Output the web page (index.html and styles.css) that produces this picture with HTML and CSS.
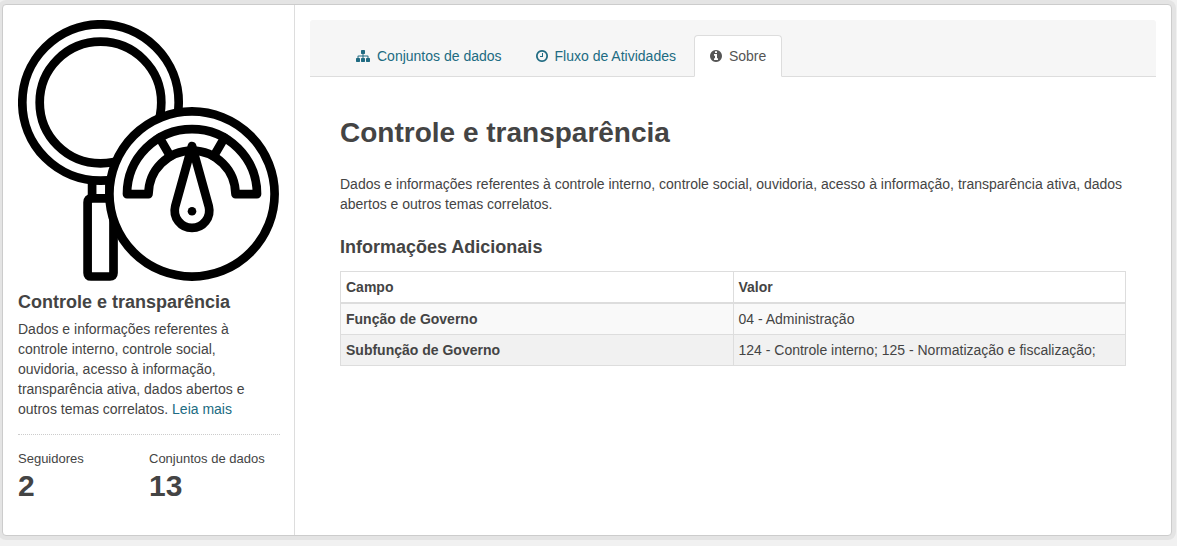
FILE: index.html
```html
<!DOCTYPE html>
<html lang="pt-BR">
<head>
<meta charset="utf-8">
<title>Controle e transparência</title>
<link rel="stylesheet" href="styles.css">
</head>
<body>
<div class="wrapper">
  <aside class="sidebar">
    <svg class="group-image" viewBox="18 20 262 262" fill="none" stroke="#000" stroke-width="8.7" stroke-linejoin="round" stroke-linecap="round">
      <circle cx="100.5" cy="102.5" r="78.2"/>
      <circle cx="100.5" cy="102.5" r="60.8"/>
      <path d="M92.1 184V198M109.5 184V198"/>
      <path d="M91.5 198.300H109.500Q113.500 198.300 113.500 202.300V273Q113.500 276.500 110 276.500H91Q87.600 276.500 87.600 273V202.300Q87.600 198.300 91.500 198.300Z"/>
      <circle cx="192" cy="194" r="82.600" fill="#fff"/>
      <path d="M127 194.100A65 65 0 0 1 257 194.100H235.500A43.500 43.500 0 0 0 148.500 194.100Z"/>
      <path d="M159.500 137.700L170.300 156.300M224.500 137.700L213.700 156.300"/>
      <path d="M192 146L175.200 206.500A17.300 17.300 0 1 0 208.800 206.500Z" fill="#fff"/>
      <circle cx="192" cy="211.200" r="4.300" fill="#000" stroke="none"/>
    </svg>
    <h1 class="side-heading">Controle e transparência</h1>
    <p class="description">Dados e informações referentes à controle interno, controle social, ouvidoria, acesso à informação, transparência ativa, dados abertos e outros temas correlatos. <a href="#">Leia mais</a></p>
    <div class="nums">
      <dl><dt>Seguidores</dt><dd>2</dd></dl>
      <dl><dt>Conjuntos de dados</dt><dd>13</dd></dl>
    </div>
  </aside>
  <main class="primary">
    <header class="page-header">
      <nav class="tabs">
        <a class="tab" href="#"><svg width="14" height="12" viewBox="0 128 1792 1536"><path d="M1792 1248v320q0 40-28 68t-68 28h-320q-40 0-68-28t-28-68v-320q0-40 28-68t68-28h96v-192h-512v192h96q40 0 68 28t28 68v320q0 40-28 68t-68 28h-320q-40 0-68-28t-28-68v-320q0-40 28-68t68-28h96v-192h-512v192h96q40 0 68 28t28 68v320q0 40-28 68t-68 28h-320q-40 0-68-28t-28-68v-320q0-40 28-68t68-28h96v-192q0-52 38-90t90-38h512v-192h-96q-40 0-68-28t-28-68v-320q0-40 28-68t68-28h320q40 0 68 28t28 68v320q0 40-28 68t-68 28h-96v192h512q52 0 90 38t38 90v192h96q40 0 68 28t28 68z"/></svg>Conjuntos de dados</a>
        <a class="tab" href="#"><svg width="12" height="12" viewBox="128 128 1536 1536"><path d="M1024 544v448q0 14-9 23t-23 9h-320q-14 0-23-9t-9-23v-64q0-14 9-23t23-9h224v-352q0-14 9-23t23-9h64q14 0 23 9t9 23zm416 352q0-148-73-273t-198-198-273-73-273 73-198 198-73 273 73 273 198 198 273 73 273-73 198-198 73-273zm224 0q0 209-103 385.5t-279.5 279.5-385.5 103-385.5-103-279.5-279.5-103-385.5 103-385.5 279.5-279.5 385.5-103 385.5 103 279.5 279.5 103 385.5z"/></svg>Fluxo de Atividades</a>
        <a class="tab active" href="#"><svg width="12" height="12" viewBox="128 128 1536 1536"><path d="M1152 1376v-160q0-14-9-23t-23-9h-96v-512q0-14-9-23t-23-9h-320q-14 0-23 9t-9 23v160q0 14 9 23t23 9h96v320h-96q-14 0-23 9t-9 23v160q0 14 9 23t23 9h448q14 0 23-9t9-23zm-128-896v-160q0-14-9-23t-23-9h-192q-14 0-23 9t-9 23v160q0 14 9 23t23 9h192q14 0 23-9t9-23zm640 416q0 209-103 385.5t-279.5 279.5-385.5 103-385.5-103-279.5-279.5-103-385.5 103-385.5 279.5-279.5 385.5-103 385.5 103 279.5 279.5 103 385.5z"/></svg>Sobre</a>
      </nav>
    </header>
    <article class="content">
      <h1>Controle e transparência</h1>
      <p>Dados e informações referentes à controle interno, controle social, ouvidoria, acesso à informação, transparência ativa, dados abertos e outros temas correlatos.</p>
      <h2>Informações Adicionais</h2>
      <table>
        <thead><tr><th>Campo</th><th>Valor</th></tr></thead>
        <tbody>
          <tr class="odd"><th>Função de Governo</th><td>04 - Administração</td></tr>
          <tr class="even"><th>Subfunção de Governo</th><td>124 - Controle interno; 125 - Normatização e fiscalização;</td></tr>
        </tbody>
      </table>
    </article>
  </main>
</div>
</body>
</html>
```
FILE: styles.css
```css
* { box-sizing: border-box; }
body {
  margin: 0;
  padding: 4px 5px 10px 2px;
  background: #f1f1f1;
  color: #444;
  font: 14px/20px "Liberation Sans", Arial, sans-serif;
}
h1, h2, p, dl, dd { margin: 0; }
a { color: #206b82; text-decoration: none; }
.wrapper {
  display: flex;
  width: 1170px;
  height: 532px;
  background: #fff;
  border: 1px solid #ccc;
  border-radius: 4px;
  box-shadow: 0 0 0 4px rgba(0, 0, 0, .05);
}
.sidebar {
  width: 292px;
  padding: 15px 14px 0 15px;
  border-right: 1px solid #ddd;
  flex: none;
}
.group-image { display: block; width: 262px; height: 262px; }
.side-heading { font-size: 18px; line-height: 23px; margin: 9px 0 5px; }
.description { margin-bottom: 15px; }
.nums {
  display: flex;
  border-top: 1px dotted #ccc;
  padding-top: 15px;
}
.nums dl { width: 131px; }
.nums dt { font-size: 13px; line-height: 18px; white-space: nowrap; }
.nums dd { font-size: 30px; line-height: 36px; font-weight: bold; }
.primary { flex: 1; padding: 15px 15px 0; }
.page-header {
  height: 57px;
  padding: 15px 30px 0;
  background: #f6f6f6;
  border-bottom: 1px solid #ddd;
  border-radius: 3px 3px 0 0;
}
.tabs { display: flex; gap: 2px; }
.tab {
  display: flex;
  align-items: center;
  gap: 7px;
  height: 42px;
  padding: 0 15px;
  border: 1px solid transparent;
  border-radius: 4px 4px 0 0;
}
.tab svg { fill: currentColor; }
.tab.active { color: #555; background: #fff; border-color: #ddd #ddd #fff; }
.content { padding: 38px 30px 0; }
.content h1 { font-size: 28px; line-height: 36px; margin-bottom: 23px; }
.content h2 { font-size: 18px; line-height: 24px; margin: 21px 0 12px; }
table {
  width: 786px;
  table-layout: fixed;
  border-collapse: separate;
  border-spacing: 0;
  border: solid #ddd;
  border-width: 1px 0 0 1px;
}
th, td {
  padding: 5px;
  text-align: left;
  border: solid #ddd;
  border-width: 0 1px 1px 0;
}
thead th { border-bottom-width: 2px; }
.odd { background: #f9f9f9; }
.even { background: #f1f1f1; }
```
